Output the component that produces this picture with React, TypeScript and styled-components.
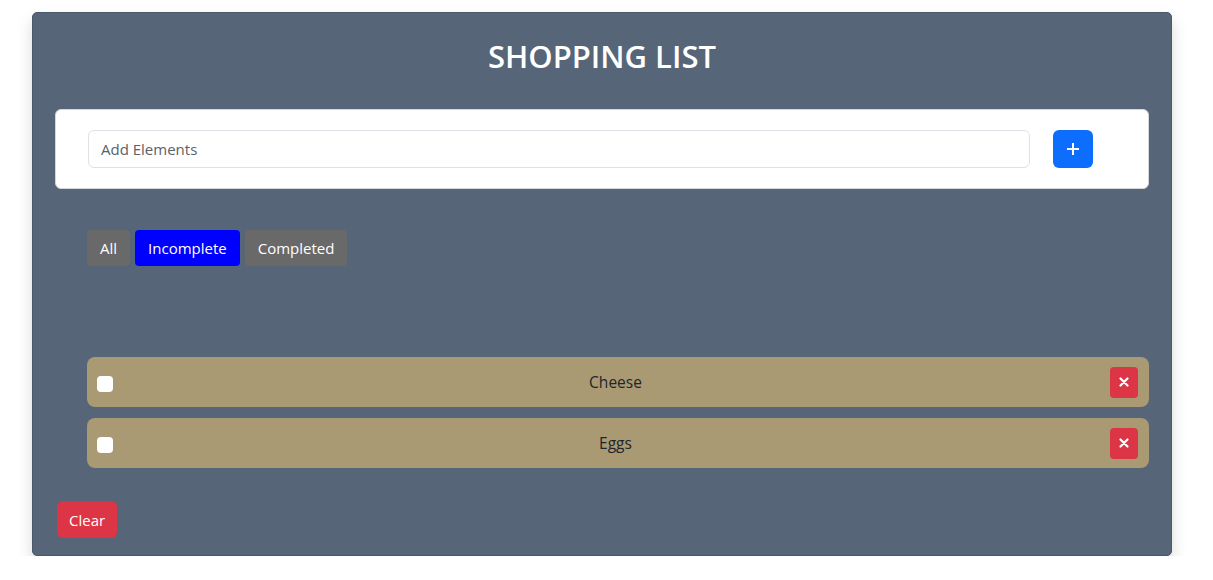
import React, { useState } from 'react';
import styled, { createGlobalStyle } from 'styled-components';

const GlobalStyle = createGlobalStyle`
  body {
    margin: 0;
    background: #ffffff;
    font-family: "Open Sans", "Noto Sans", sans-serif;
    color: #212529;
  }
  * { box-sizing: border-box; }
`;

const Page = styled.div`
  padding: 12px 0 0 32px;
`;

const Card = styled.div`
  width: 1140px;
  background: #566578;
  border: 1px solid #4a5869;
  border-radius: 5px;
  box-shadow: 0 8px 16px rgba(0, 0, 0, 0.15);
  padding: 0 22px 17px 22px;
`;

const Header = styled.div`
  height: 96px;
  display: flex;
  align-items: center;
  justify-content: center;
  padding-bottom: 10px;
`;

const Title = styled.h1`
  margin: 0;
  color: #ffffff;
  font-size: 31px;
  font-weight: 600;
  letter-spacing: 0;
`;

const FormBox = styled.form`
  height: 80px;
  background: #ffffff;
  border: 1px solid #d3d6da;
  border-radius: 6px;
  display: flex;
  align-items: center;
  padding: 0 55px 0 32px;
  gap: 23px;
`;

const Input = styled.input`
  flex: 1;
  height: 38px;
  border: 1px solid #dee2e6;
  border-radius: 6px;
  padding: 0 12px;
  font-family: inherit;
  font-size: 15px;
  color: #212529;
  &::placeholder { color: #59616b; }
  &:focus { outline: none; }
`;

const AddButton = styled.button`
  width: 40px;
  height: 38px;
  border: none;
  border-radius: 6px;
  background: #0d6efd;
  display: flex;
  align-items: center;
  justify-content: center;
  cursor: pointer;
`;

const FilterRow = styled.div`
  display: flex;
  gap: 5px;
  margin: 41px 0 0 32px;
`;

const FilterButton = styled.button<{ $active: boolean }>`
  height: 36px;
  padding: 0 13px;
  border: none;
  border-radius: 4px;
  background: ${({ $active }) => ($active ? '#0000ff' : '#696969')};
  color: #ffffff;
  font-family: inherit;
  font-size: 15px;
  cursor: pointer;
`;

const List = styled.ul`
  list-style: none;
  margin: 91px 0 0 32px;
  padding: 0;
  display: flex;
  flex-direction: column;
  gap: 11px;
`;

const Item = styled.li`
  height: 50px;
  background: #a99a74;
  border-radius: 8px;
  display: flex;
  align-items: center;
  padding: 0 11px 0 10px;
`;

const Check = styled.input`
  appearance: none;
  width: 16px;
  height: 16px;
  margin: 4px 0 0 0;
  background: #ffffff;
  border-radius: 4px;
  cursor: pointer;
`;

const ItemText = styled.span`
  flex: 1;
  margin-left: 8px;
  text-align: center;
  font-size: 15.5px;
  color: #212529;
`;

const DeleteButton = styled.button`
  width: 28px;
  height: 31px;
  border: none;
  border-radius: 4px;
  background: #dc3545;
  display: flex;
  align-items: center;
  justify-content: center;
  cursor: pointer;
`;

const ClearButton = styled.button`
  margin: 33px 0 0 2px;
  height: 37px;
  padding: 0 12px;
  border: none;
  border-radius: 6px;
  background: #dc3545;
  color: #ffffff;
  font-family: inherit;
  font-size: 15px;
  cursor: pointer;
`;

const PlusIcon = () => (
  <svg width="14" height="14" viewBox="0 0 14 14">
    <path d="M7 1v12M1 7h12" stroke="#fff" strokeWidth="2" />
  </svg>
);

const CrossIcon = () => (
  <svg width="10" height="10" viewBox="0 0 10 10">
    <path d="M1.5 1.5l7 7M8.5 1.5l-7 7" stroke="#fff" strokeWidth="2.2" strokeLinecap="round" />
  </svg>
);

const filters = ['All', 'Incomplete', 'Completed'];

export default function App() {
  const [filter, setFilter] = useState('Incomplete');
  const [items, setItems] = useState(['Cheese', 'Eggs']);

  return (
    <Page>
      <GlobalStyle />
      <Card>
        <Header>
          <Title>SHOPPING LIST</Title>
        </Header>
        <FormBox onSubmit={(e) => e.preventDefault()}>
          <Input placeholder="Add Elements" />
          <AddButton type="submit">
            <PlusIcon />
          </AddButton>
        </FormBox>
        <FilterRow>
          {filters.map((f) => (
            <FilterButton key={f} $active={filter === f} onClick={() => setFilter(f)}>
              {f}
            </FilterButton>
          ))}
        </FilterRow>
        <List>
          {items.map((name) => (
            <Item key={name}>
              <Check type="checkbox" />
              <ItemText>{name}</ItemText>
              <DeleteButton onClick={() => setItems(items.filter((i) => i !== name))}>
                <CrossIcon />
              </DeleteButton>
            </Item>
          ))}
        </List>
        <ClearButton onClick={() => setItems([])}>Clear</ClearButton>
      </Card>
    </Page>
  );
}
